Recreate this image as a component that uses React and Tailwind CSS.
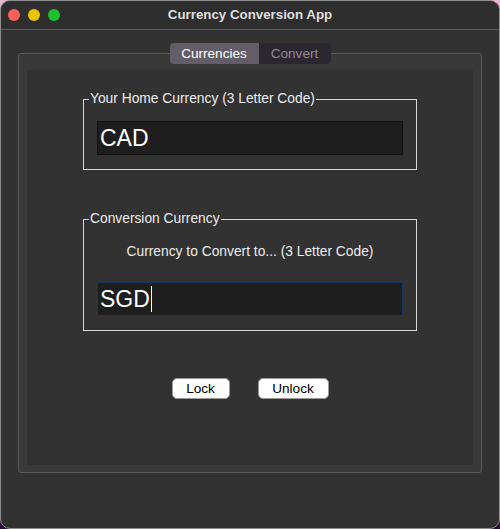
const FONT = { fontFamily: '"Liberation Sans", Arial, sans-serif' };

function TrafficLights() {
  return (
    <div className="absolute left-[7px] top-[8px] flex gap-[8px]">
      <span className="h-[12px] w-[12px] rounded-full bg-[#fe5f57]" />
      <span className="h-[12px] w-[12px] rounded-full bg-[#e9c300]" />
      <span className="h-[12px] w-[12px] rounded-full bg-[#1cc22e]" />
    </div>
  );
}

function Group({ legend, children, className = "" }) {
  return (
    <fieldset className={`border border-[#d6d6d6] px-[13px] pb-[14px] ${className}`}>
      <legend className="-ml-[8px] px-[1px] text-[13.8px] leading-[16px] text-[#ececec]">
        {legend}
      </legend>
      {children}
    </fieldset>
  );
}

export default function App() {
  return (
    <div className="h-[529px] w-[500px] bg-gradient-to-b from-[#e8b6cf] to-[#2b0c3c]" style={FONT}>
      <div className="flex h-full w-full flex-col overflow-hidden rounded-[10px] border border-[#8e8e8e] bg-[#323232]">
        {/* title bar */}
        <div className="relative flex h-[29px] shrink-0 items-center justify-center border-b border-[#5e5e5e] bg-[#2e2e2e]">
          <TrafficLights />
          <span className="text-[13.3px] font-bold text-[#dedede]">Currency Conversion App</span>
        </div>

        {/* tabs */}
        <div className="relative z-10 mt-[13px] flex h-[21px] justify-center text-[13.6px] leading-[21px]">
          <div className="w-[89px] rounded-l-[4px] bg-[#625d66] text-center text-white">Currencies</div>
          <div className="w-[72px] rounded-r-[4px] bg-[#2b2630] text-center text-[#8f8a94]">Convert</div>
        </div>

        {/* tab box */}
        <div className="mx-[17px] -mt-[11px] h-[420px] rounded-[3px] border border-[#5a5a5a] bg-[#393939] px-[8px] pb-[7px] pt-[16px]">
          <div className="flex h-full flex-col bg-[#323232] px-[56px] pt-[21px]">
            <Group legend="Your Home Currency (3 Letter Code)" className="pt-[14px]">
              <div className="flex h-[34px] items-center border border-[#111111] bg-[#1e1e1e] pl-[2px] text-[23px] text-white">
                CAD
              </div>
            </Group>

            <Group legend="Conversion Currency" className="mt-[41px] pt-[17px]">
              <div className="text-center text-[13.8px] leading-[16px] text-[#ececec]">
                Currency to Convert to... (3 Letter Code)
              </div>
              <div className="mt-[22px] flex h-[34px] items-center border border-[#17355d] bg-[#1e1e1e] pl-[2px] text-[23px] text-white">
                SGD
                <span className="ml-[1px] h-[26px] w-[1px] bg-white" />
              </div>
            </Group>

            <div className="mt-[47px] flex justify-center gap-[28px] text-[13.6px] text-black">
              <button className="h-[21px] w-[58px] rounded-[5px] border border-[#9a9a9a] bg-white">Lock</button>
              <button className="h-[21px] w-[71px] rounded-[5px] border border-[#9a9a9a] bg-white">Unlock</button>
            </div>
          </div>
        </div>
      </div>
    </div>
  );
}
